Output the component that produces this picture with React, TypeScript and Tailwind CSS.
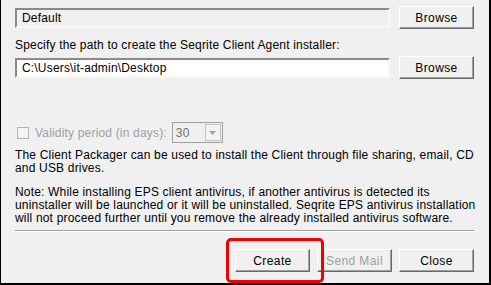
import React from 'react'

const font = { fontFamily: '"Liberation Sans", Arial, sans-serif' }

function SunkenField({ value, disabled }: { value: string; disabled?: boolean }) {
  return (
    <div
      className={`w-[375px] h-[20px] border-2 border-t-[#8a8a8a] border-l-[#8a8a8a] border-r-[#f7f7f7] border-b-[#f7f7f7] flex items-center pl-[5px] text-[12px] text-black ${
        disabled ? 'bg-[#f0f0f0]' : 'bg-white'
      }`}
    >
      {value}
    </div>
  )
}

function WinButton({ label, disabled }: { label: string; disabled?: boolean }) {
  return (
    <button
      className={`w-[75px] h-[23px] bg-[#f0f0f0] border border-t-white border-l-white border-r-[#6a6a6a] border-b-[#6a6a6a] shadow-[inset_-1px_-1px_0_#a0a0a0] text-[12px] tracking-[0.4px] flex items-center justify-center ${
        disabled ? 'text-[#a0a0a0]' : 'text-black'
      }`}
    >
      {label}
    </button>
  )
}

export default function App() {
  return (
    <div
      style={font}
      className="w-[491px] h-[285px] bg-[#f0f0f0] border-l border-r-2 border-b-2 border-black relative overflow-hidden"
    >
      <div className="pl-[14px] pr-[15px] pt-[6px] flex flex-col tracking-[0.18px]">
        {/* 기본 경로 */}
        <div className="flex items-center justify-between h-[23px]">
          <SunkenField value="Default" disabled />
          <WinButton label="Browse" />
        </div>

        <div className="mt-[10px] text-[12px] leading-[13px] text-black">
          Specify the path to create the Seqrite Client Agent installer:
        </div>

        <div className="mt-[4px] flex items-center justify-between h-[23px]">
          <SunkenField value="C:\Users\it-admin\Desktop" />
          <WinButton label="Browse" />
        </div>

        {/* 유효 기간 */}
        <div className="mt-[43px] flex items-center h-[21px]">
          <div className="ml-[2px] w-[12px] h-[12px] border border-[#b5b5b5] bg-[#f4f4f4]" />
          <span className="ml-[6px] text-[12px] text-[#a0a0a0]">Validity period (in days):</span>
          <div className="ml-[5px] w-[51px] h-[21px] border border-[#a0a0a0] bg-[#f0f0f0] flex items-center justify-between pl-[3px] pr-[1px]">
            <span className="text-[12px] text-[#6d6d6d]">30</span>
            <div className="w-[16px] h-[17px] border border-[#c4c4c4] bg-[#f4f4f4] flex items-center justify-center">
              <svg width="7" height="4" viewBox="0 0 7 4">
                <path d="M0 0h7L3.5 4z" fill="#a0a0a0" />
              </svg>
            </div>
          </div>
        </div>

        <p className="mt-[6px] text-[12px] leading-[13px] text-black whitespace-nowrap">
          The Client Packager can be used to install the Client through file sharing, email, CD
          <br />
          and USB drives.
        </p>

        <p className="mt-[11px] text-[12px] leading-[13px] text-black whitespace-nowrap">
          Note: While installing EPS client antivirus, if another antivirus is detected its
          <br />
          uninstaller will be launched or it will be uninstalled. Seqrite EPS antivirus installation
          <br />
          will not proceed further until you remove the already installed antivirus software.
        </p>

        <div className="mt-[5px] border-t border-[#a0a0a0] border-b border-b-white" />

        <div className="mt-[17px] flex justify-end gap-[7px]">
          <WinButton label="Create" />
          <WinButton label="Send Mail" disabled />
          <WinButton label="Close" />
        </div>
      </div>

      {/* 강조 표시 */}
      <div className="absolute left-[225px] top-[238px] w-[98px] h-[45px] border-[3px] border-[#f00000] rounded-[5px]" />
    </div>
  )
}
